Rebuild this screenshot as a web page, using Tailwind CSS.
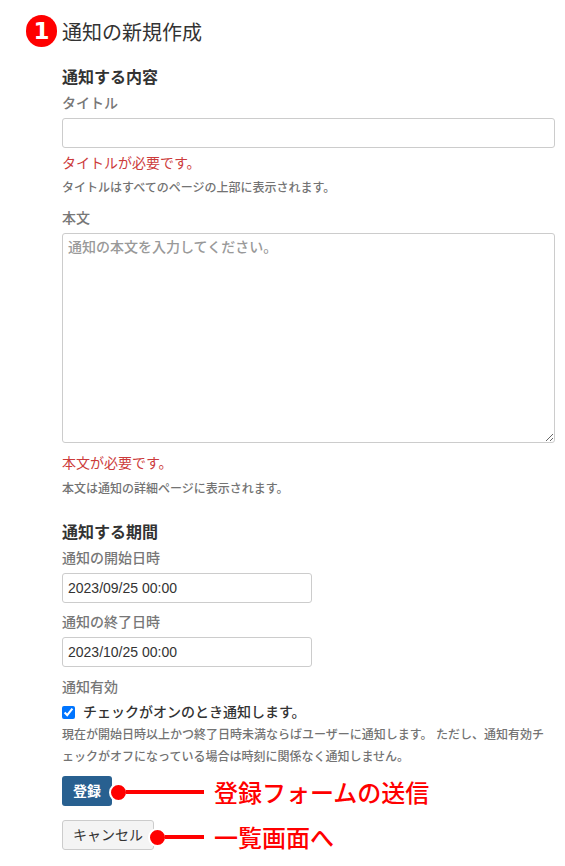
<!DOCTYPE html>
<html lang="ja">
<head>
<meta charset="utf-8">
<script src="https://cdn.jsdelivr.net/npm/@tailwindcss/browser@4"></script>
</head>
<body class="bg-white">
<div class="relative w-[565px] h-[866px] overflow-hidden font-['Liberation_Sans','Noto_Sans_CJK_JP',sans-serif] text-[#333]">
  <div class="flex items-start h-[32px] mt-[15px] pl-[26px] gap-[4px]">
    <span class="flex items-center justify-center w-[31px] h-[32px] rounded-full bg-[#ff0000] text-white text-[23px] font-bold leading-none font-['DejaVu_Sans',sans-serif]">1</span>
    <h1 class="ml-[1px] text-[20px] leading-[36px] font-normal">通知の新規作成</h1>
  </div>
  <form class="pl-[62px] w-[555px] pt-[19px]">
    <h2 class="text-[16px] leading-[24px] font-bold">通知する内容</h2>
    <label class="block text-[14px] leading-[26px] mb-[2px] font-medium text-[#777]">タイトル</label>
    <input type="text" class="block w-full h-[30px] bg-white border border-[#ccc] rounded-[3px]">
    <p class="text-[14px] leading-[20px] mt-[5px] text-[#cc3b3b]">タイトルが必要です。</p>
    <p class="text-[12px] leading-[20px] mt-[5px] font-medium text-[#737373]">タイトルはすべてのページの上部に表示されます。</p>
    <label class="block text-[14px] leading-[20px] mt-[10px] font-medium text-[#777]">本文</label>
    <textarea placeholder="通知の本文を入力してください。" class="block w-full h-[210px] mt-[5px] px-[5px] py-[3px] text-[14px] leading-[20px] bg-white border border-[#ccc] rounded-[3px] placeholder:text-[#999] placeholder:font-medium"></textarea>
    <p class="text-[14px] leading-[20px] mt-[10px] text-[#cc3b3b]">本文が必要です。</p>
    <p class="text-[12px] leading-[20px] mt-[6px] font-medium text-[#737373]">本文は通知の詳細ページに表示されます。</p>
    <h2 class="text-[16px] leading-[24px] mt-[22px] font-bold">通知する期間</h2>
    <label class="block text-[14px] leading-[20px] mt-[3px] font-medium text-[#777]">通知の開始日時</label>
    <input type="text" value="2023/09/25 00:00" class="block w-[250px] h-[30px] mt-[5px] px-[5px] text-[14px] text-[#333] bg-white border border-[#ccc] rounded-[3px]">
    <label class="block text-[14px] leading-[20px] mt-[9px] font-medium text-[#777]">通知の終了日時</label>
    <input type="text" value="2023/10/25 00:00" class="block w-[250px] h-[30px] mt-[5px] px-[5px] text-[14px] text-[#333] bg-white border border-[#ccc] rounded-[3px]">
    <label class="block text-[14px] leading-[20px] mt-[10px] font-medium text-[#777]">通知有効</label>
    <label class="flex items-center h-[20px] mt-[5px] gap-[8px]">
      <input type="checkbox" checked class="w-[13px] h-[13px] m-0 accent-[#0075ff]">
      <span class="text-[14px] leading-[20px] font-medium">チェックがオンのとき通知します。</span>
    </label>
    <p class="text-[12px] leading-[22px] mt-[2px] font-medium text-[#737373]">現在が開始日時以上かつ終了日時未満ならばユーザーに通知します。 ただし、通知有効チェックがオフになっている場合は時刻に関係なく通知しません。</p>
    <button type="button" class="block w-[50px] h-[30px] mt-[8px] rounded-[3px] bg-[#286090] text-white text-[14px] font-bold">登録</button>
    <button type="button" class="block w-[92px] h-[30px] mt-[14px] rounded-[3px] bg-[#f4f4f4] border border-[#ccc] text-[#333] text-[14px] font-normal">キャンセル</button>
  </form>
  <div class="absolute left-[109px] top-[778px] flex items-center">
    <span class="w-[15px] h-[15px] rounded-full bg-[#ff0000] border-[2px] border-white box-content"></span>
    <span class="w-[78px] h-[4px] -ml-[2px] bg-[#ff0000]"></span>
    <span class="ml-[10px] mt-[4px] text-[24px] leading-[24px] font-medium text-[#ff0000] whitespace-nowrap">登録フォームの送信</span>
  </div>
  <div class="absolute left-[148px] top-[823px] flex items-center">
    <span class="w-[15px] h-[15px] rounded-full bg-[#ff0000] border-[2px] border-white box-content"></span>
    <span class="w-[39px] h-[4px] -ml-[2px] bg-[#ff0000]"></span>
    <span class="ml-[10px] mt-[4px] text-[24px] leading-[24px] font-medium text-[#ff0000] whitespace-nowrap">一覧画面へ</span>
  </div>
</div>
</body>
</html>
